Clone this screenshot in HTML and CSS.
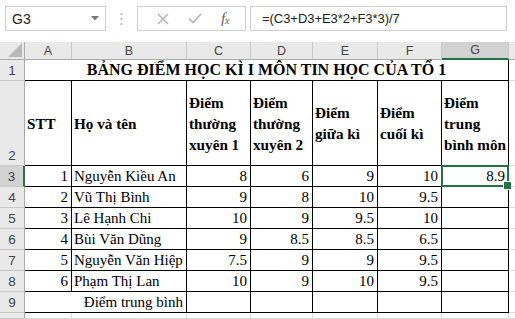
FILE: index.html
```html
<!DOCTYPE html>
<html lang="vi">
<head>
<meta charset="UTF-8" />
<title>Bảng điểm</title>
<link rel="stylesheet" href="styles.css">
</head>
<body>

<div class="formula-bar">
  <div class="name-box">
    <span>G3</span>
    <svg class="drop" width="8" height="5" viewBox="0 0 8 5"><path d="M0 0h8L4 4.5z" fill="#777"/></svg>
  </div>
  <div class="grip">
    <svg width="3" height="12" viewBox="0 0 3 12"><rect x="0.5" y="0" width="2" height="2" fill="#bbb"/><rect x="0.5" y="5" width="2" height="2" fill="#bbb"/><rect x="0.5" y="10" width="2" height="2" fill="#bbb"/></svg>
  </div>
  <div class="fx-buttons">
    <svg width="12" height="12" viewBox="0 0 12 12"><path d="M1 1l10 10M11 1L1 11" stroke="#b3b3b3" stroke-width="1.4" fill="none"/></svg>
    <svg width="14" height="11" viewBox="0 0 14 11"><path d="M1 5.5l4 4L13 1" stroke="#b3b3b3" stroke-width="1.6" fill="none"/></svg>
    <span class="fx">f<sub>x</sub></span>
  </div>
  <div class="formula-input">=(C3+D3+E3*2+F3*3)/7</div>
</div>

<div class="sheet">
  <!-- column headers -->
  <div class="corner"><svg width="14" height="14" viewBox="0 0 14 14"><path d="M14 0v14H0z" fill="#b8b8b8"/></svg></div>
  <div class="col-head">A</div>
  <div class="col-head">B</div>
  <div class="col-head">C</div>
  <div class="col-head">D</div>
  <div class="col-head">E</div>
  <div class="col-head">F</div>
  <div class="col-head selected">G</div>
  <div class="col-head last"></div>

  <!-- row 1 -->
  <div class="row-head">1</div>
  <div class="cell t title span7">BẢNG ĐIỂM HỌC KÌ I MÔN TIN HỌC CỦA TỔ 1</div>
  <div class="cell last"></div>

  <!-- row 2 -->
  <div class="row-head bottom">2</div>
  <div class="cell t head">STT</div>
  <div class="cell t head">Họ và tên</div>
  <div class="cell t head">Điểm thường xuyên 1</div>
  <div class="cell t head">Điểm thường xuyên 2</div>
  <div class="cell t head">Điểm giữa kì</div>
  <div class="cell t head">Điểm cuối kì</div>
  <div class="cell t head">Điểm trung bình môn</div>
  <div class="cell last"></div>

  <!-- row 3 -->
  <div class="row-head selected">3</div>
  <div class="cell t num">1</div>
  <div class="cell t">Nguyễn Kiều An</div>
  <div class="cell t num">8</div>
  <div class="cell t num">6</div>
  <div class="cell t num">9</div>
  <div class="cell t num">10</div>
  <div class="cell t num active">8.9</div>
  <div class="cell last"></div>

  <!-- row 4 -->
  <div class="row-head">4</div>
  <div class="cell t num">2</div>
  <div class="cell t">Vũ Thị Bình</div>
  <div class="cell t num">9</div>
  <div class="cell t num">8</div>
  <div class="cell t num">10</div>
  <div class="cell t num">9.5</div>
  <div class="cell t num"></div>
  <div class="cell last"></div>

  <!-- row 5 -->
  <div class="row-head">5</div>
  <div class="cell t num">3</div>
  <div class="cell t">Lê Hạnh Chi</div>
  <div class="cell t num">10</div>
  <div class="cell t num">9</div>
  <div class="cell t num">9.5</div>
  <div class="cell t num">10</div>
  <div class="cell t num"></div>
  <div class="cell last"></div>

  <!-- row 6 -->
  <div class="row-head">6</div>
  <div class="cell t num">4</div>
  <div class="cell t">Bùi Văn Dũng</div>
  <div class="cell t num">9</div>
  <div class="cell t num">8.5</div>
  <div class="cell t num">8.5</div>
  <div class="cell t num">6.5</div>
  <div class="cell t num"></div>
  <div class="cell last"></div>

  <!-- row 7 -->
  <div class="row-head">7</div>
  <div class="cell t num">5</div>
  <div class="cell t">Nguyễn Văn Hiệp</div>
  <div class="cell t num">7.5</div>
  <div class="cell t num">9</div>
  <div class="cell t num">9</div>
  <div class="cell t num">9.5</div>
  <div class="cell t num"></div>
  <div class="cell last"></div>

  <!-- row 8 -->
  <div class="row-head">8</div>
  <div class="cell t num">6</div>
  <div class="cell t">Phạm Thị Lan</div>
  <div class="cell t num">10</div>
  <div class="cell t num">9</div>
  <div class="cell t num">10</div>
  <div class="cell t num">9.5</div>
  <div class="cell t num"></div>
  <div class="cell last"></div>

  <!-- row 9 -->
  <div class="row-head">9</div>
  <div class="cell t num span2">Điểm trung bình</div>
  <div class="cell t"></div>
  <div class="cell t"></div>
  <div class="cell t"></div>
  <div class="cell t"></div>
  <div class="cell t"></div>
  <div class="cell last"></div>

  <!-- row 10, only its top edge shows -->
  <div class="row-head"></div>
  <div class="cell"></div>
  <div class="cell"></div>
  <div class="cell"></div>
  <div class="cell"></div>
  <div class="cell"></div>
  <div class="cell"></div>
  <div class="cell"></div>
  <div class="cell last"></div>
</div>

</body>
</html>
```

FILE: styles.css
```css
* {
  box-sizing: border-box;
}
body {
  margin: 0;
  width: 515px;
  height: 319px;
  overflow: hidden;
  background: #fff;
  font-family: 'Liberation Sans', Arial, sans-serif;
  color: #222;
}

/* formula bar */
.formula-bar {
  display: flex;
  align-items: flex-start;
  height: 42px;
  padding-top: 6px;
}

.name-box {
  display: flex;
  align-items: center;
  justify-content: space-between;
  margin-left: 5px;
  width: 101px;
  height: 25px;
  border: 1px solid #d0d0d0;
  padding: 0 6px 0 6px;
  font-size: 14px;
  color: #222;
}

.grip {
  width: 31px;
  height: 25px;
  display: flex;
  align-items: center;
  justify-content: center;
}

.fx-buttons {
  display: flex;
  align-items: center;
  justify-content: space-around;
  width: 109px;
  height: 25px;
  border: 1px solid #d0d0d0;
  padding: 0 6px 0 10px;
}

.fx {
  font-family: 'Liberation Serif', serif;
  font-style: italic;
  font-size: 14px;
  color: #555;
}
.fx sub {
  font-size: 10px;
  vertical-align: -1px;
}

.formula-input {
  flex: 1;
  height: 25px;
  margin: 0 8px 0 4px;
  border: 1px solid #d0d0d0;
  padding: 0 0 0 11px;
  line-height: 23px;
  font-size: 13px;
  letter-spacing: -0.05px;
  color: #222;
}

/* sheet grid */
.sheet {
  display: grid;
  grid-template-columns: 25px 47px 115px 64px 62px 65px 64px 67px 1fr;
  grid-template-rows: 18px 21px 85px repeat(7, 21px) 1fr;
  height: 277px;
}

.corner,
.col-head,
.row-head {
  background: #e9e9e9;
  border-right: 1px solid #c8c8c8;
  border-bottom: 1px solid #c8c8c8;
  color: #444;
  font-size: 12.5px;
  display: flex;
  align-items: center;
  justify-content: center;
}

.corner {
  align-items: flex-end;
  justify-content: flex-end;
  padding: 0 2px 2px 0;
  border-bottom-color: #ababab;
  border-right-color: #ababab;
}

.col-head {
  border-bottom-color: #ababab;
}
.col-head.selected {
  background: #d2d2d2;
  border-bottom: 2px solid #217346;
}
.col-head.last {
  border-right: none;
}

.row-head {
  border-right-color: #ababab;
  font-size: 13.5px;
}
.row-head.bottom {
  align-items: flex-end;
  padding-bottom: 2px;
}
.row-head.selected {
  background: #d2d2d2;
  border-right: 2px solid #217346;
}

.cell {
  border-right: 1px solid #dadada;
  border-bottom: 1px solid #dadada;
  font-family: 'Liberation Serif', 'Times New Roman', serif;
  font-size: 15px;
  color: #000;
  padding: 0 2px;
  line-height: 20px;
  white-space: nowrap;
}
.cell.t {
  border-right-color: #000;
  border-bottom-color: #000;
}
.cell.last {
  border-right: none;
}

.num {
  text-align: right;
  padding-right: 3px;
}

.title {
  grid-column: span 7;
  text-align: center;
  font-weight: bold;
  font-size: 16px;
}

.span2 {
  grid-column: span 2;
}

.head {
  display: flex;
  align-items: center;
  white-space: normal;
  font-weight: bold;
  font-size: 15.2px;
  line-height: 21px;
  padding: 0 0 0 2px;
}

.active {
  position: relative;
}
.active::after {
  content: "";
  position: absolute;
  top: -1px;
  left: -1px;
  right: -1px;
  bottom: -1px;
  border: 2px solid #217346;
}
.active::before {
  content: "";
  position: absolute;
  right: -4px;
  bottom: -4px;
  width: 7px;
  height: 7px;
  background: #217346;
  border: 1px solid #fff;
  z-index: 1;
}
```
